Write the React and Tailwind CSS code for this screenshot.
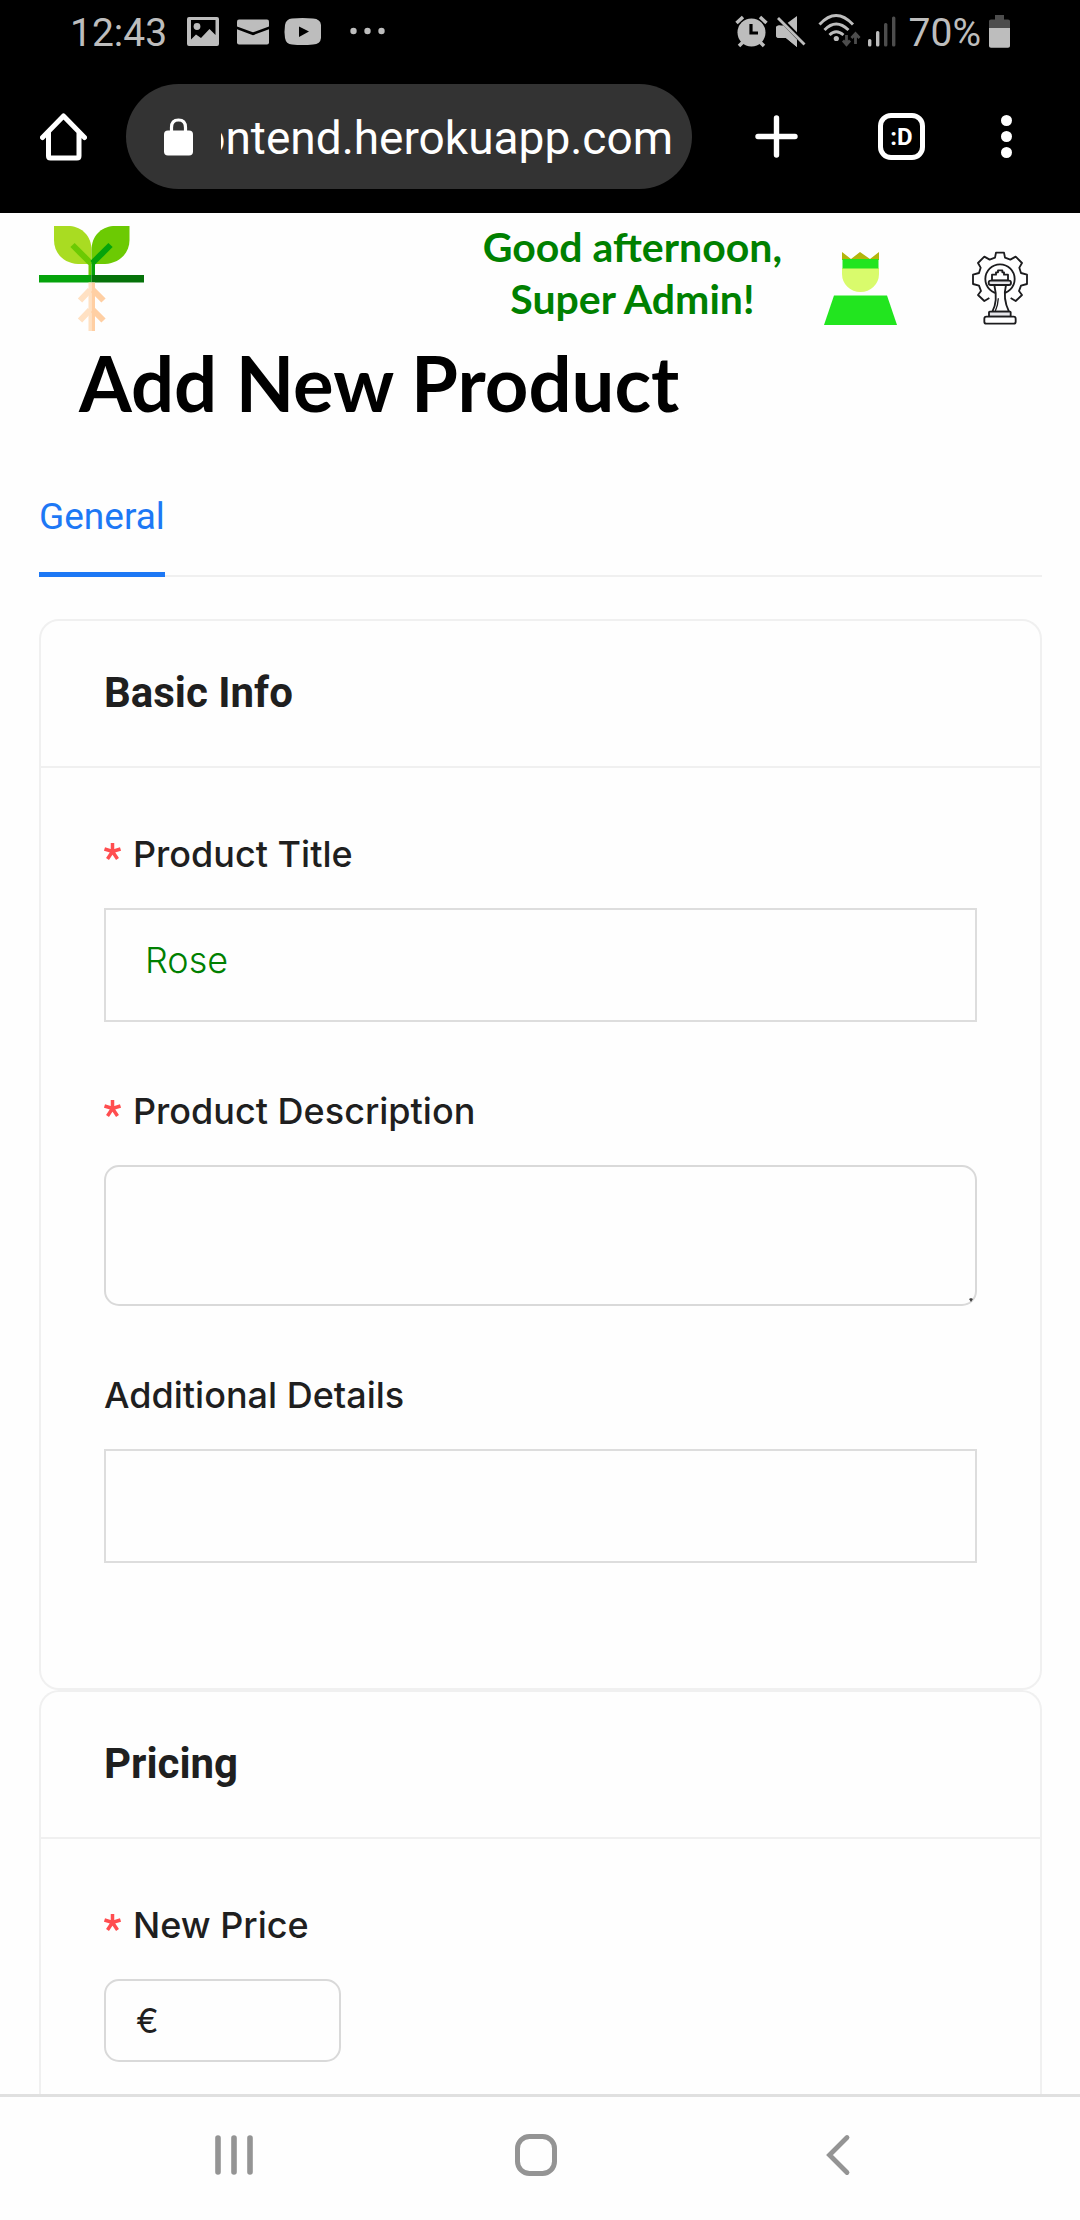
const GREY = "#bdbdbd";
const DIM = "#4d4d4d";

function StatusBar() {
  return (
    <div className="flex h-[62px] items-center justify-between pr-[70px] pl-[70px] text-[39px] leading-none text-[#bdbdbd]">
      <div className="flex items-center">
        <span className="pt-[5px]">12:43</span>
        <svg className="ml-5" width="32" height="36" viewBox="0 0 32 36" aria-hidden="true">
          <path fill={GREY} fillRule="evenodd" d="M2 4H30a2 2 0 0 1 2 2V31a2 2 0 0 1-2 2H2a2 2 0 0 1-2-2V6a2 2 0 0 1 2-2zM4 7V26.500L9 21.500L14 25L22.500 16L28.500 22V7z" />
          <circle cx="10" cy="13.500" r="3.400" fill={GREY} />
        </svg>
        <svg className="ml-[18px]" width="32" height="36" viewBox="0 0 32 36" aria-hidden="true">
          <rect y="6.500" width="32" height="25" rx="2" fill={GREY} />
          <path d="M-1 14.500L16 20.800L33 14.500" fill="none" stroke="#000" strokeWidth="2.700" />
        </svg>
        <svg className="ml-[15px]" width="37" height="36" viewBox="0 0 37 36" aria-hidden="true">
          <path fill={GREY} d="M8 5.500Q18.500 4.500 29 5.500Q36.500 6 37 12V25Q36.500 31 29 31.500Q18.500 32.500 8 31.500Q2 31 1 25Q0 18.500 1 12Q2 6 8 5.500z" />
          <path d="M15 13.500L25 18.500L15 24z" fill="#000" />
        </svg>
        <svg className="ml-[29px]" width="36" height="36" viewBox="0 0 36 36" aria-hidden="true" fill={GREY}>
          <circle cx="3.500" cy="18" r="3.200" />
          <circle cx="17.500" cy="18" r="3.200" />
          <circle cx="31.500" cy="18" r="3.200" />
        </svg>
      </div>
      <div className="flex items-center">
        <svg width="33" height="36" viewBox="0 0 33 36" aria-hidden="true">
          <circle cx="16.500" cy="19.500" r="14" fill={GREY} />
          <path d="M1.500 10L8 4M31.500 10L25 4M4 33L8 29M29 33L25 29" stroke={GREY} strokeWidth="3.500" />
          <path d="M16 11V20H23" fill="none" stroke="#000" strokeWidth="3.200" />
        </svg>
        <svg className="ml-2" width="30" height="36" viewBox="0 0 30 36" aria-hidden="true">
          <path fill={GREY} d="M0 15Q0 12.500 3 12.500H8L21 3V34L10 25H3Q0 25 0 22z" />
          <path d="M0 3L30 33.500" stroke="#000" strokeWidth="7" />
          <path fill={GREY} d="M0 15Q0 12.500 3 12.500H7.500L21 26.500V34L10 25H3Q0 25 0 22z" />
          <path d="M2 5L28.500 31.500" stroke={GREY} strokeWidth="2.800" />
        </svg>
        <svg className="ml-3" width="43" height="36" viewBox="0 0 43 36" aria-hidden="true">
          <g fill="none" stroke={GREY} strokeWidth="2.900">
            <path d="M1.500 11.500Q18 -6.500 35 11.500" />
            <path d="M6.500 17Q18 5 30.500 17" />
            <path d="M11.500 22Q18 15.500 25.500 22" />
          </g>
          <circle cx="18.300" cy="25.500" r="2.600" fill={GREY} />
          <path d="M28.500 22V31M25 27.500L28.500 31.500L32 27.500M37.500 31V21M33.500 25L37.500 20.500L41.500 25" fill="none" stroke={DIM} strokeWidth="2.800" />
        </svg>
        <svg className="ml-[7px]" width="28" height="36" viewBox="0 0 28 36" aria-hidden="true">
          <rect x="0" y="26" width="3.400" height="7.500" rx="1.500" fill={GREY} />
          <rect x="8" y="18" width="3.400" height="15.500" rx="1.500" fill={GREY} />
          <rect x="16" y="10" width="3.400" height="23.500" rx="1.500" fill={DIM} />
          <rect x="24" y="3.500" width="3.400" height="30" rx="1.500" fill={DIM} />
        </svg>
        <span className="pt-[5px] pl-[13px]">70%</span>
        <svg className="ml-2" width="21" height="36" viewBox="0 0 21 36" aria-hidden="true">
          <path d="M6 2H15V6.500H19Q21 6.500 21 8V15H0V8Q0 6.500 2 6.500H6z" fill={DIM} />
          <path d="M0 15H21V33Q21 34.800 19 34.800H2Q0 34.800 0 33z" fill={GREY} />
        </svg>
      </div>
    </div>
  );
}

function BrowserBar() {
  return (
    <div className="flex items-center pt-[22px] pr-[68px] pb-6 pl-10 text-white">
      <button type="button" aria-label="Home" className="shrink-0">
        <svg width="47" height="48" viewBox="0 0 47 48" fill="none" stroke="#fff" strokeWidth="5" strokeLinejoin="round" strokeLinecap="round">
          <path d="M2.500 24.500L23.500 3L44.500 24.500M8.500 20V43Q8.500 45 10.500 45H37Q39 45 39 43V20" />
        </svg>
      </button>
      <div className="ml-[39px] flex h-[105px] min-w-0 flex-1 items-center rounded-full bg-[#333333] pr-[19px] pl-[38px]">
        <svg className="shrink-0" width="29" height="38" viewBox="0 0 29 38" aria-hidden="true">
          <rect y="12.500" width="29" height="25" rx="4" fill="#fff" />
          <path d="M7.500 14V9.500Q7.500 2 14.500 2T21.500 9.500V14" fill="none" stroke="#fff" strokeWidth="3.200" />
        </svg>
        <div className="ml-7 flex min-w-0 flex-1 justify-end overflow-hidden pt-[3px] text-[46px] leading-[60px]">
          <span>ontend.herokuapp.com</span>
        </div>
      </div>
      <button type="button" aria-label="New tab" className="ml-[63px] shrink-0">
        <svg width="43" height="43" viewBox="0 0 43 43" stroke="#fff" strokeWidth="5.400" strokeLinecap="round">
          <path d="M21.500 3V40M3 21.500H40" />
        </svg>
      </button>
      <button type="button" aria-label="Tabs" className="ml-20 flex size-[47px] shrink-0 items-center justify-center rounded-[13px] border-5 border-white text-[24px] leading-none font-bold">
        :D
      </button>
      <button type="button" aria-label="More options" className="ml-[76px] shrink-0">
        <svg width="11" height="43" viewBox="0 0 11 43" fill="#fff">
          <circle cx="5.500" cy="5.500" r="5.500" />
          <circle cx="5.500" cy="21.500" r="5.500" />
          <circle cx="5.500" cy="37.500" r="5.500" />
        </svg>
      </button>
    </div>
  );
}

function PlantLogo() {
  return (
    <svg width="105" height="105" viewBox="0 0 105 105" fill="none" role="img" aria-label="Plant shop">
      <path d="M15 0H31C43 1 52.500 10 52.500 24V38H39C24 37 15 27 15 14z" fill="#a9dc22" />
      <path d="M90.500 0H74C62 1 52.500 10 52.500 24V38H66C81 37 90.500 27 90.500 14z" fill="#6cca03" />
      <path d="M33.500 19L51.500 37" stroke="#6cca03" strokeWidth="6" />
      <path d="M49.500 33L52.500 36V49H49.500z" fill="#6cca03" />
      <path d="M71.500 19L53.500 37" stroke="#05a30b" strokeWidth="6" />
      <path d="M52.500 34H56V49H52.500z" fill="#05a30b" />
      <path d="M0 49H52.500V56.500H0z" fill="#05a30b" />
      <path d="M52.500 49H105V56.500H52.500z" fill="#057209" />
      <path d="M51 64L41 74.500M51 84L41 94.500" stroke="#ffe1c3" strokeWidth="6" />
      <path d="M54 64L64.500 74.500M54 84L64.500 94.500" stroke="#ffcfa3" strokeWidth="6" />
      <path d="M49.500 56.500H52.500V105H49.500z" fill="#ffe1c3" />
      <path d="M52.500 56.500H56V105H52.500z" fill="#ffcfa3" />
    </svg>
  );
}

function AdminIcon() {
  return (
    <svg width="73" height="73" viewBox="0 0 73 73">
      <path d="M18 0L27 7L36 0L46 7L55 0V8H18z" fill="#b3b50c" />
      <path d="M18 16H55V22A18.500 18 0 0 1 18 22z" fill="#d9fb6c" />
      <path d="M18.500 7H54.500V16.500H18.500z" fill="#22e51f" />
      <path d="M10 43.500H63L73 73H0z" fill="#22e51f" />
    </svg>
  );
}

function StrategyIcon() {
  return (
    <svg width="56" height="74" viewBox="518 66 168 222" fill="#fff" stroke="#1c1c1e" strokeWidth="5.500" strokeLinejoin="round">
      <path d="M570 207L555 216L536 198L545 186L539 170L521 165V137L539 132L544 116L536 102L555 83L571 92L587 86L590 71H614L617 86L633 92L649 83L668 102L660 116L665 132L683 137V165L665 170L659 186L668 198L649 216L634 207" />
      <circle cx="602" cy="150" r="44" />
      <path d="M578 154V137H590V130H596V124H609V130H614V137H626V154z" />
      <path d="M585 168C592 198 592 224 579 248H629C617 224 613 196 620 168z" />
      <path d="M597 208Q596 228 588 246" fill="none" strokeWidth="4" />
      <rect x="568" y="155" width="67" height="13" rx="6" fill="#e6e6ea" />
      <rect x="569" y="248" width="65" height="15" rx="2" fill="#e6e6ea" />
      <rect x="555" y="263" width="94" height="21" rx="6" />
    </svg>
  );
}

function Card({ title, className, children }) {
  return (
    <section className={className}>
      <h2 className="border-b-2 border-[#f0f0f0] px-[63px] pt-11 pb-[45px] text-[42px] leading-[56px] font-bold">{title}</h2>
      <div className="flex flex-col gap-[61px] px-[63px] pt-[58px]">{children}</div>
    </section>
  );
}

function Field({ id, label, required, children }) {
  return (
    <div className="flex flex-col gap-[26px]">
      <label htmlFor={id} className="flex gap-3 font-[Inter,sans-serif] text-[36px] leading-[56px] font-medium">
        {required && (
          <svg className="mt-[17px]" width="17" height="17" viewBox="0 0 17 17" stroke="#ff4d4f" strokeWidth="3.500" role="img" aria-label="required">
            <path d="M8.500 0V8.500M0.500 6L8.500 8.500L16.500 6M3.500 16L8.500 8.500L13.500 16" fill="none" />
          </svg>
        )}
        <span>{label}</span>
      </label>
      {children}
    </div>
  );
}

export default function App() {
  return (
    <div className="flex min-h-screen flex-col bg-[#fefefe] font-[Roboto,sans-serif] text-[#1f1f1f]">
      <div className="bg-black">
        <StatusBar />
        <BrowserBar />
      </div>

      <header className="flex items-end pt-2 pr-[52px] pl-[39px]">
        <PlantLogo />
        <p className="mr-[42px] mb-[6px] ml-auto text-center font-[Lato,sans-serif] text-[41px] leading-[52px] font-bold text-[#008000]">
          Good afternoon,
          <br />
          Super Admin!
        </p>
        <button type="button" aria-label="Account" className="mr-[75px] mb-[6px]">
          <AdminIcon />
        </button>
        <button type="button" aria-label="Admin tools" className="mb-[6px]">
          <StrategyIcon />
        </button>
      </header>

      <main className="flex flex-1 flex-col pr-[38px] pl-[39px]">
        <h1 className="mt-[6px] pl-10 font-[Lato,sans-serif] text-[76px] leading-[92px] font-bold text-black">Add New Product</h1>

        <nav className="mt-[60px] flex border-b-2 border-[#f0f0f0]">
          <button type="button" className="-mb-[2px] border-b-5 border-[#1d78f5] pb-[27px] text-[37px] leading-[56px] text-[#1d78f5]">
            General
          </button>
        </nav>

        <form className="mt-[42px] flex flex-1 flex-col">
          <Card title="Basic Info" className="rounded-[20px] border-2 border-[#f0f0f0] pb-[125px]">
            <Field id="title" label="Product Title" required>
              <input id="title" defaultValue="Rose" className="h-[114px] w-full border-2 border-[#dddddd] px-[39px] pb-[10px] font-[Inter,sans-serif] text-[36px] font-light text-[#008000] outline-none" />
            </Field>
            <Field id="description" label="Product Description" required>
              <div className="relative flex">
                <textarea id="description" className="h-[141px] w-full resize-none rounded-[15px] border-2 border-[#d9d9d9] px-[30px] py-3 text-[36px] outline-none" />
                <svg className="absolute right-1 bottom-1" width="4" height="4" viewBox="0 0 4 4" aria-hidden="true">
                  <path d="M0 1L2 0L4 1L2 4z" fill="#444" />
                </svg>
              </div>
            </Field>
            <Field id="details" label="Additional Details">
              <input id="details" className="h-[114px] w-full border-2 border-[#dddddd] px-[39px] text-[36px] outline-none" />
            </Field>
          </Card>

          <Card title="Pricing" className="flex-1 rounded-t-[20px] border-2 border-b-0 border-[#f0f0f0] pb-[26px]">
            <Field id="price" label="New Price" required>
              <div className="flex h-[83px] w-[237px] items-center rounded-[15px] border-2 border-[#d9d9d9] px-[30px] font-[Inter,sans-serif] text-[34px]">
                <span>€</span>
                <input id="price" inputMode="decimal" className="min-w-0 flex-1 pl-2 outline-none" />
              </div>
            </Field>
          </Card>
        </form>
      </main>

      <footer className="grid grid-cols-3 justify-items-center border-t-3 border-[#e0e0e0] bg-[#fefefe] pt-9 pr-[91px] pb-[43px] pl-[83px]">
        <button type="button" aria-label="Recent apps">
          <svg width="44" height="44" viewBox="0 0 44 44" stroke="#949494" strokeWidth="5.600" strokeLinecap="round">
            <path d="M6 5V39M22 5V39M38 5V39" />
          </svg>
        </button>
        <button type="button" aria-label="Home screen">
          <svg width="44" height="44" viewBox="0 0 44 44" fill="none" stroke="#949494" strokeWidth="5">
            <rect x="3.500" y="3.500" width="37" height="37" rx="12" />
          </svg>
        </button>
        <button type="button" aria-label="Back">
          <svg width="44" height="44" viewBox="0 0 44 44" fill="none" stroke="#949494" strokeWidth="4.800" strokeLinecap="round">
            <path d="M31 4.500L13.500 22L31 39.500" />
          </svg>
        </button>
      </footer>
    </div>
  );
}
